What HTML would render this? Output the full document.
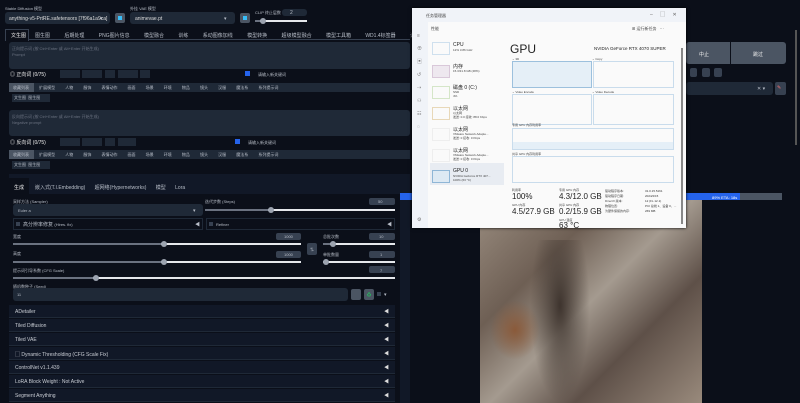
<!DOCTYPE html>
<html><head><meta charset="utf-8">
<style>
*{box-sizing:border-box;margin:0;padding:0}
body{width:800px;height:403px;overflow:hidden;background:#0b0f19;font-family:"Liberation Sans","Noto Sans CJK SC",sans-serif;color:#c9cdd4;position:relative;font-size:5px}
.a{position:absolute}
.box{background:#1f2937;border-radius:3px}
.in{background:#374151;border-radius:2px}
.t{position:absolute;white-space:nowrap;font-size:5px;color:#b8bec8}
.sl{position:absolute;height:2px;background:#e5e7eb}
.sl i{position:absolute;left:0;top:0;height:2px;background:#6b7280}
.sl b{position:absolute;top:-2px;width:6px;height:6px;border-radius:50%;background:#9ca3af}
.acc{position:absolute;left:9px;width:386px;height:13px;background:#111827;border-bottom:1px solid #1f2937}
.acc span{position:absolute;left:6px;top:4px;font-size:5px;color:#c9cdd4}
.acc em{position:absolute;right:6px;top:3px;font-style:normal;font-size:5px;color:#ddd}
.tm{color:#222}
.tm .t{color:#444}
.tm .big{font-size:8px;color:#222}
</style></head><body>
<div class="t" style="left:5px;top:6px;font-size:4px">Stable Diffusion 模型</div>
<div class="a box" style="left:5px;top:12px;width:105px;height:12px"></div>
<div class="t" style="left:9px;top:16px;color:#ddd">anything-v5-PrtRE.safetensors [7f96a1a9ca]</div>
<div class="t" style="left:100px;top:16px">▾</div>
<div class="a" style="left:115px;top:13px;width:10px;height:10px;background:#4b5563;border-radius:2px"><div class="a" style="left:3px;top:3px;width:4px;height:4px;background:#38bdf8"></div></div>
<div class="t" style="left:130px;top:6px;font-size:4px">外挂 VAE 模型</div>
<div class="a box" style="left:130px;top:12px;width:105px;height:12px"></div>
<div class="t" style="left:135px;top:16px;color:#ddd">animevae.pt</div>
<div class="t" style="left:224px;top:16px">▾</div>
<div class="a" style="left:240px;top:13px;width:10px;height:10px;background:#4b5563;border-radius:2px"><div class="a" style="left:3px;top:3px;width:4px;height:4px;background:#38bdf8"></div></div>
<div class="t" style="left:255px;top:10px;font-size:4px">CLIP 终止层数</div>
<div class="a box" style="left:282px;top:9px;width:25px;height:7px"></div>
<div class="t" style="left:290px;top:10px">2</div>
<div class="sl" style="left:255px;top:20px;width:52px"><i style="width:5px"></i><b style="left:5px"></b></div>
<div class="a" style="left:5px;top:29px;width:405px;height:11px;border-bottom:1px solid #374151"></div>
<div class="a" style="left:5px;top:29px;width:24px;height:12px;background:#0b0f19;border:1px solid #374151;border-bottom:none"></div>
<div class="t" style="left:11px;top:32px;color:#eee">文生图</div>
<div class="t" style="left:35px;top:32px;word-spacing:13px">图生图 后期处理 PNG图片信息 模型融合 训练 系动图像加线 模型转换 超级模型融合 模型工具箱 WD1.4标签器 设置 扩展</div>
<div class="a box" style="left:9px;top:42px;width:401px;height:27px"></div>
<div class="t" style="left:12px;top:46px;color:#6b7280;font-size:4px">正向提示词 (按 Ctrl+Enter 或 Alt+Enter 开始生成)<br>Prompt</div>
<div class="t" style="left:10px;top:71px;color:#eee">◎ 正向词 (0/75)</div>
<div class="a" style="left:60px;top:70px;width:20px;height:8px;background:#1f2937"></div>
<div class="a" style="left:82px;top:70px;width:20px;height:8px;background:#1f2937"></div>
<div class="a" style="left:105px;top:70px;width:10px;height:8px;background:#1f2937"></div>
<div class="a" style="left:118px;top:70px;width:20px;height:8px;background:#1f2937"></div>
<div class="a" style="left:140px;top:70px;width:10px;height:8px;background:#1f2937"></div>
<div class="a" style="left:245px;top:71px;width:5px;height:5px;background:#2563eb"></div>
<div class="t" style="left:258px;top:72px;font-size:4px">请输入新关键词</div>
<div class="a" style="left:9px;top:83px;width:401px;height:9px;background:#1f2937"></div>
<div class="a" style="left:9px;top:83px;width:25px;height:9px;background:#4b5563"></div>
<div class="t" style="left:13px;top:85px;word-spacing:9px;font-size:4px">收藏列表 扩展模型 人物 服饰 表情动作 画面 场景 环境 物品 镜头 汉服 魔法系 系列提示词</div>
<div class="a" style="left:12px;top:94px;width:38px;height:8px;background:#1f2937"></div>
<div class="t" style="left:14px;top:95px;font-size:4px">文生图 &nbsp;图生图</div>
<div class="a box" style="left:9px;top:110px;width:401px;height:26px"></div>
<div class="t" style="left:12px;top:114px;color:#6b7280;font-size:4px">反向提示词 (按 Ctrl+Enter 或 Alt+Enter 开始生成)<br>Negative prompt</div>
<div class="t" style="left:10px;top:139px;color:#eee">◎ 反向词 (0/75)</div>
<div class="a" style="left:60px;top:138px;width:20px;height:8px;background:#1f2937"></div>
<div class="a" style="left:82px;top:138px;width:20px;height:8px;background:#1f2937"></div>
<div class="a" style="left:105px;top:138px;width:10px;height:8px;background:#1f2937"></div>
<div class="a" style="left:118px;top:138px;width:18px;height:8px;background:#1f2937"></div>
<div class="a" style="left:235px;top:139px;width:5px;height:5px;background:#2563eb"></div>
<div class="t" style="left:248px;top:140px;font-size:4px">请输入新关键词</div>
<div class="a" style="left:9px;top:150px;width:401px;height:9px;background:#1f2937"></div>
<div class="a" style="left:9px;top:150px;width:25px;height:9px;background:#4b5563"></div>
<div class="t" style="left:13px;top:152px;word-spacing:9px;font-size:4px">收藏列表 扩展模型 人物 服饰 表情动作 画面 场景 环境 物品 镜头 汉服 魔法系 系列提示词</div>
<div class="a" style="left:12px;top:161px;width:38px;height:8px;background:#1f2937"></div>
<div class="t" style="left:14px;top:162px;font-size:4px">文生图 &nbsp;图生图</div>
<div class="a" style="left:9px;top:174px;width:401px;height:229px;background:#111827"></div>
<div class="a" style="left:9px;top:178px;width:20px;height:16px;background:#0b0f19"></div>
<div class="t" style="left:14px;top:184px;color:#eee">生成</div>
<div class="t" style="left:35px;top:184px;word-spacing:8px">嵌入式(T.I.Embedding) 超网络(Hypernetworks) 模型 Lora</div>
<div class="a" style="left:9px;top:194px;width:391px;height:209px;background:#0b0f19"></div>
<div class="t" style="left:13px;top:199px;font-size:4px">采样方法 (Sampler)</div>
<div class="a box" style="left:13px;top:204px;width:190px;height:12px"></div>
<div class="t" style="left:18px;top:208px;font-size:4px">Euler a</div>
<div class="t" style="left:193px;top:208px">▾</div>
<div class="t" style="left:205px;top:199px;font-size:4px">迭代步数 (Steps)</div>
<div class="a in" style="left:369px;top:198px;width:26px;height:7px"></div>
<div class="t" style="left:378px;top:199px;font-size:4px">50</div>
<div class="sl" style="left:205px;top:209px;width:190px"><i style="width:63px"></i><b style="left:63px"></b></div>
<div class="a" style="left:13px;top:218px;width:190px;height:12px;border:1px solid #1f2937"></div>
<div class="a" style="left:16px;top:222px;width:4px;height:4px;background:#374151"></div>
<div class="t" style="left:23px;top:221px">高分辨率修复 <span style="font-size:4px">(Hires. fix)</span></div>
<div class="t" style="left:195px;top:221px">◀</div>
<div class="a" style="left:206px;top:218px;width:189px;height:12px;border:1px solid #1f2937"></div>
<div class="a" style="left:209px;top:222px;width:4px;height:4px;background:#374151"></div>
<div class="t" style="left:216px;top:222px;font-size:4px">Refiner</div>
<div class="t" style="left:387px;top:221px">◀</div>
<div class="t" style="left:13px;top:234px;font-size:4px">宽度</div>
<div class="a in" style="left:276px;top:233px;width:25px;height:7px"></div>
<div class="t" style="left:284px;top:234px;font-size:4px">1000</div>
<div class="sl" style="left:13px;top:243px;width:288px"><i style="width:148px"></i><b style="left:148px"></b></div>
<div class="t" style="left:13px;top:251px;font-size:4px">高度</div>
<div class="a in" style="left:276px;top:251px;width:25px;height:7px"></div>
<div class="t" style="left:284px;top:252px;font-size:4px">1000</div>
<div class="sl" style="left:13px;top:261px;width:288px"><i style="width:148px"></i><b style="left:148px"></b></div>
<div class="a in" style="left:307px;top:243px;width:10px;height:12px"></div>
<div class="t" style="left:310px;top:247px;font-size:4px">⇅</div>
<div class="t" style="left:323px;top:234px;font-size:4px">总批次数</div>
<div class="a in" style="left:369px;top:233px;width:26px;height:7px"></div>
<div class="t" style="left:379px;top:234px;font-size:4px">10</div>
<div class="sl" style="left:323px;top:243px;width:72px"><i style="width:7px"></i><b style="left:7px"></b></div>
<div class="t" style="left:323px;top:252px;font-size:4px">单批数量</div>
<div class="a in" style="left:369px;top:251px;width:26px;height:7px"></div>
<div class="t" style="left:380px;top:252px;font-size:4px">1</div>
<div class="sl" style="left:323px;top:261px;width:72px"><b style="left:0"></b></div>
<div class="t" style="left:13px;top:268px;font-size:4px">提示词引导系数 (CFG Scale)</div>
<div class="a in" style="left:369px;top:266px;width:26px;height:7px"></div>
<div class="t" style="left:380px;top:268px;font-size:4px">7</div>
<div class="sl" style="left:13px;top:277px;width:382px"><i style="width:80px"></i><b style="left:80px"></b></div>
<div class="t" style="left:13px;top:284px;font-size:4px">随机数种子 (Seed)</div>
<div class="a box" style="left:13px;top:288px;width:335px;height:13px"></div>
<div class="t" style="left:17px;top:292px;font-size:4px">11</div>
<div class="a in" style="left:351px;top:289px;width:10px;height:11px;background:#4b5563"></div>
<div class="a in" style="left:364px;top:289px;width:10px;height:11px;background:#4b5563"></div>
<div class="t" style="left:367px;top:292px;color:#22c55e;font-size:4px">♻</div>
<div class="a" style="left:377px;top:292px;width:4px;height:4px;background:#374151"></div>
<div class="t" style="left:384px;top:292px">▾</div>
<div class="acc" style="top:305px"><span>ADetailer</span><em>◀</em></div>
<div class="acc" style="top:319px"><span>Tiled Diffusion</span><em>◀</em></div>
<div class="acc" style="top:333px"><span>Tiled VAE</span><em>◀</em></div>
<div class="acc" style="top:347px"><span>▢ Dynamic Thresholding (CFG Scale Fix)</span><em>◀</em></div>
<div class="acc" style="top:361px"><span>ControlNet v1.1.439</span><em>◀</em></div>
<div class="acc" style="top:375px"><span>LoRA Block Weight : Not Active</span><em>◀</em></div>
<div class="acc" style="top:389px"><span>Segment Anything</span><em>◀</em></div>
<div class="a" style="left:686px;top:42px;width:44px;height:22px;background:#4b5563;border-radius:3px 0 0 3px"></div>
<div class="a" style="left:731px;top:42px;width:55px;height:22px;background:#4b5563;border-radius:0 3px 3px 0"></div>
<div class="t" style="left:699px;top:51px;color:#eee">中止</div>
<div class="t" style="left:753px;top:51px;color:#eee">跳过</div>
<div class="a" style="left:690px;top:68px;width:7px;height:9px;background:#374151;border-radius:2px"></div>
<div class="a" style="left:702px;top:68px;width:8px;height:9px;background:#374151;border-radius:2px"></div>
<div class="a" style="left:714px;top:68px;width:8px;height:9px;background:#374151;border-radius:2px"></div>
<div class="a box" style="left:686px;top:82px;width:87px;height:13px"></div>
<div class="t" style="left:757px;top:86px">✕ ▾</div>
<div class="a" style="left:775px;top:82px;width:11px;height:13px;background:#374151;border-radius:2px"></div>
<div class="t" style="left:777px;top:85px;color:#f87171">✎</div>
<div class="a" style="left:400px;top:193px;width:382px;height:7px;background:#4b5563"></div>
<div class="a" style="left:400px;top:193px;width:340px;height:7px;background:#2563eb"></div>
<div class="t" style="left:712px;top:195px;color:#fff;font-size:4px">89% ETA: 18s</div>
<div class="a" style="left:794px;top:0;width:6px;height:403px;background:#0b0f19"></div>
<div class="a" style="left:795px;top:30px;width:2px;height:115px;background:#555"></div>
<div class="a" style="left:480px;top:200px;width:222px;height:203px;background:linear-gradient(135deg,#9a8d80,#6e5f54 30%,#a49a8f 50%,#5e5048 70%,#998a7c)"></div>
<div class="a" style="left:530px;top:240px;width:60px;height:163px;background:radial-gradient(ellipse at 50% 40%,#3e342e,transparent 70%)"></div>
<div class="a" style="left:490px;top:300px;width:50px;height:60px;background:radial-gradient(#8a5a3a,transparent 70%)"></div>
<div class="a tm" style="left:412px;top:8px;width:274px;height:220px;background:#fafafa;box-shadow:0 0 3px #000">
 <div class="a" style="left:0;top:0;width:274px;height:14px;background:#f0f3f8"></div>
 <div class="t" style="left:14px;top:5px;font-size:4px">任务管理器</div>
 <div class="t" style="left:238px;top:3px;font-size:5px;color:#666;word-spacing:6px">– ▢ ✕</div>
 <div class="a" style="left:0;top:14px;width:16px;height:206px;background:#f0f3f8"></div>
 <div class="t" style="left:5px;top:22px;color:#777;line-height:13px">≡<br>⊕<br>▣<br>↺<br>⇢<br>⚇<br>☷<br>◌</div>
 <div class="t" style="left:5px;top:209px;color:#777">⚙</div>
 <div class="t" style="left:19px;top:18px;font-size:4px">性能</div>
 <div class="t" style="left:220px;top:18px;font-size:4px">⊞ 运行新任务 &nbsp; ···</div>
 <div class="a" style="left:18px;top:155px;width:74px;height:22px;background:#e8ecf2"></div>
 <div class="a" style="left:20px;top:34px;width:18px;height:13px;border:1px solid #cfe0ee"></div>
 <div class="a" style="left:20px;top:57px;width:18px;height:13px;border:1px solid #d9c8d9;background:#eee8ef"></div>
 <div class="a" style="left:20px;top:78px;width:18px;height:13px;border:1px solid #d5e6c8"></div>
 <div class="a" style="left:20px;top:99px;width:18px;height:13px;border:1px solid #e8d8b8"></div>
 <div class="a" style="left:20px;top:120px;width:18px;height:13px;border:1px solid #eee"></div>
 <div class="a" style="left:20px;top:141px;width:18px;height:13px;border:1px solid #eee"></div>
 <div class="a" style="left:20px;top:162px;width:18px;height:13px;border:1px solid #8fb6d6;background:#dde9f3"></div>
 <div class="t" style="left:41px;top:34px;font-size:5px;color:#222">CPU</div><div class="t" style="left:41px;top:40px;font-size:3px">12% 3.86 GHz</div>
 <div class="t" style="left:41px;top:55px;font-size:5px;color:#222">内存</div><div class="t" style="left:41px;top:61px;font-size:3px">15.3/31.8 GB (48%)</div>
 <div class="t" style="left:41px;top:76px;font-size:5px;color:#222">磁盘 0 (C:)</div><div class="t" style="left:41px;top:82px;font-size:3px;line-height:4px">SSD<br>4%</div>
 <div class="t" style="left:41px;top:97px;font-size:5px;color:#222">以太网</div><div class="t" style="left:41px;top:103px;font-size:3px;line-height:4px">以太网<br>发送: 0.0 接收: 88.0 Kbps</div>
 <div class="t" style="left:41px;top:118px;font-size:5px;color:#222">以太网</div><div class="t" style="left:41px;top:124px;font-size:3px;line-height:4px">VMware Network Adapte...<br>发送: 0 接收: 0 Kbps</div>
 <div class="t" style="left:41px;top:139px;font-size:5px;color:#222">以太网</div><div class="t" style="left:41px;top:145px;font-size:3px;line-height:4px">VMware Network Adapte...<br>发送: 0 接收: 0 Kbps</div>
 <div class="t" style="left:41px;top:160px;font-size:5px;color:#222">GPU 0</div><div class="t" style="left:41px;top:166px;font-size:3px;line-height:4px">NVIDIA GeForce RTX 407...<br>100% (63 °C)</div>
 <div class="t" style="left:98px;top:34px;font-size:12px;color:#222">GPU</div>
 <div class="t" style="left:182px;top:38px;font-size:4.5px;color:#222">NVIDIA GeForce RTX 4070 SUPER</div>
 <div class="t" style="left:100px;top:49px;font-size:3px">⌄ 3D</div><div class="t" style="left:180px;top:49px;font-size:3px">⌄ Copy</div>
 <div class="a" style="left:100px;top:53px;width:80px;height:27px;border:1px solid #9cc0dd;background:#e5eff7"></div>
 <div class="a" style="left:181px;top:53px;width:81px;height:27px;border:1px solid #c9dcec"></div>
 <div class="t" style="left:100px;top:82px;font-size:3px">⌄ Video Encode</div><div class="t" style="left:180px;top:82px;font-size:3px">⌄ Video Decode</div>
 <div class="a" style="left:100px;top:86px;width:80px;height:31px;border:1px solid #c9dcec"></div>
 <div class="a" style="left:181px;top:86px;width:81px;height:31px;border:1px solid #c9dcec"></div>
 <div class="t" style="left:100px;top:115px;font-size:3px">专用 GPU 内存利用率</div>
 <div class="a" style="left:100px;top:120px;width:162px;height:22px;border:1px solid #c9dcec"></div>
 <div class="a" style="left:101px;top:134px;width:160px;height:7px;background:#e5eff7"></div>
 <div class="t" style="left:100px;top:144px;font-size:3px">共享 GPU 内存利用率</div>
 <div class="a" style="left:100px;top:148px;width:162px;height:27px;border:1px solid #c9dcec"></div>
 <div class="t" style="left:100px;top:180px;font-size:3px">利用率</div>
 <div class="t big" style="left:100px;top:184px">100%</div>
 <div class="t" style="left:100px;top:195px;font-size:3px">GPU 内存</div>
 <div class="t big" style="left:100px;top:199px">4.5/27.9 GB</div>
 <div class="t" style="left:147px;top:180px;font-size:3px">专用 GPU 内存</div>
 <div class="t big" style="left:147px;top:184px">4.3/12.0 GB</div>
 <div class="t" style="left:147px;top:195px;font-size:3px">共享 GPU 内存</div>
 <div class="t big" style="left:147px;top:199px">0.2/15.9 GB</div>
 <div class="t" style="left:147px;top:210px;font-size:3px">GPU 温度</div>
 <div class="t big" style="left:147px;top:213px">63 °C</div>
 <div class="t" style="left:193px;top:181px;font-size:3px;line-height:5px">驱动程序版本:<br>驱动程序日期:<br>DirectX 版本:<br>物理位置:<br>为硬件保留的内存:</div>
 <div class="t" style="left:233px;top:181px;font-size:3px;line-height:5px;color:#333">31.0.15.5161<br>2024/2/15<br>12 (FL 12.1)<br>PCI 总线 1、设备 0、...<br>269 MB</div>
 <div class="a" style="left:269px;top:40px;width:2px;height:176px;background:#888"></div>
</div>
</body></html>
